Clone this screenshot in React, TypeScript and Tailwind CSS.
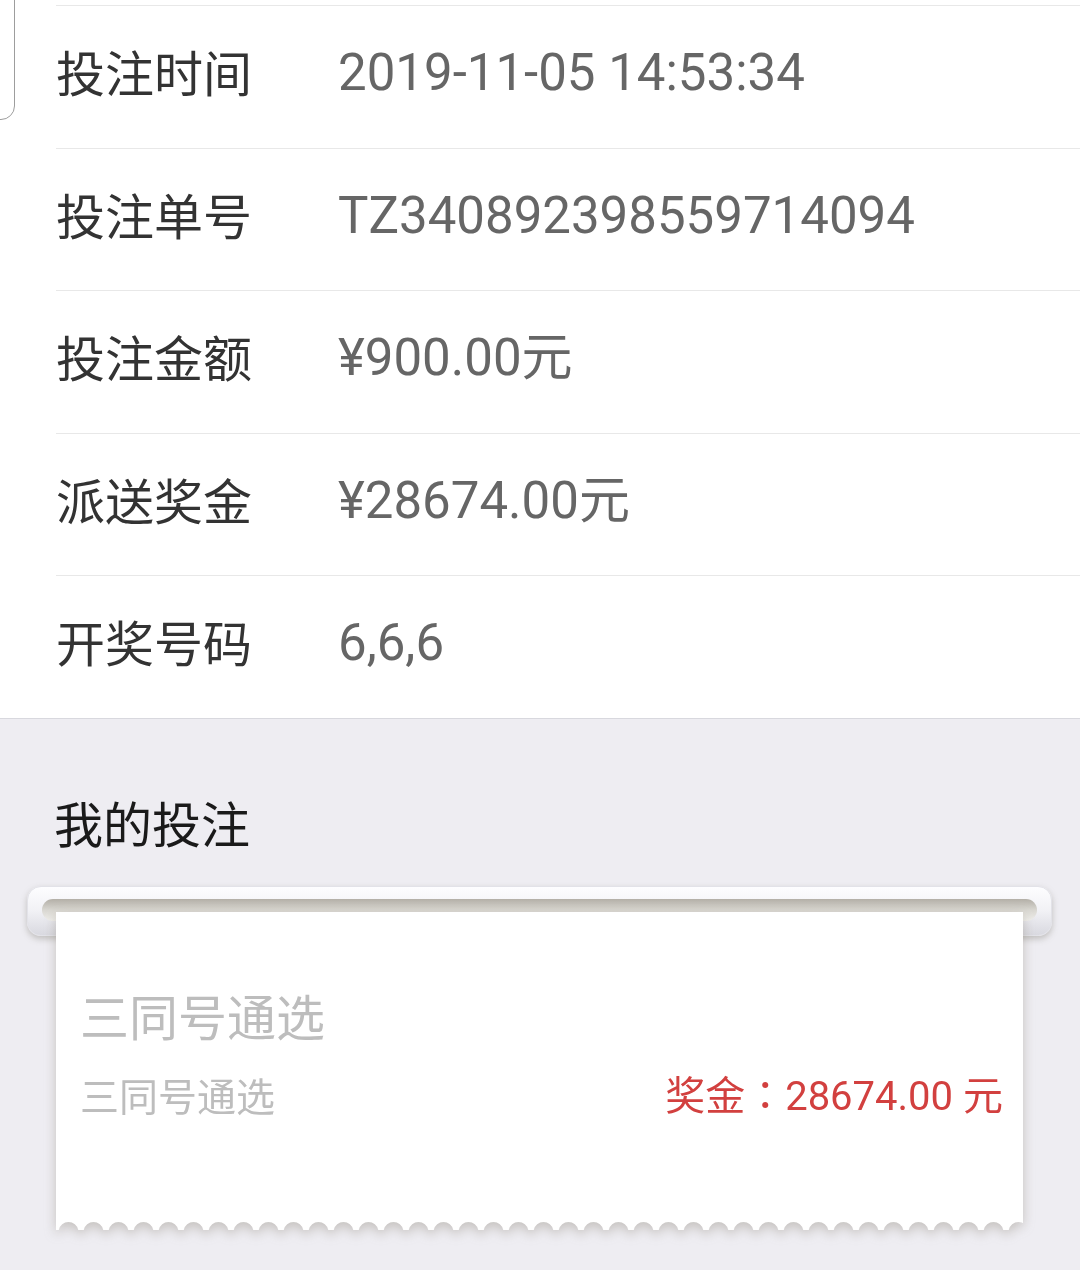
const cjk = "font-['Noto_Sans_CJK_SC',sans-serif]"
const mixed = "font-['Roboto','Noto_Sans_CJK_SC',sans-serif]"

const rows: [string, string][] = [
  ['投注时间', '2019-11-05 14:53:34'],
  ['投注单号', 'TZ340892398559714094'],
  ['投注金额', '¥900.00元'],
  ['派送奖金', '¥28674.00元'],
  ['开奖号码', '6,6,6'],
]

function InfoRow({label, value}: {label: string; value: string}) {
  return (
    <div className="ml-[56px] flex h-[142.5px] items-center border-t border-[#e8e8e8] pb-[8px]">
      <div className={`relative top-[-2px] w-[282px] text-[49px] leading-none text-[#333333] ${cjk}`}>
        {label}
      </div>
      <div className={`text-[51px] leading-none text-[#666666] ${mixed}`}>{value}</div>
    </div>
  )
}

function ScallopEdge() {
  return (
    <svg className="block h-[12px] w-full" preserveAspectRatio="none">
      <defs>
        <pattern id="scallop" width="25" height="12" patternUnits="userSpaceOnUse">
          <path d="M0 0 H25 V12 H22.3 A10 10 0 0 0 2.7 12 H0 Z" fill="#ffffff" />
        </pattern>
      </defs>
      <rect width="100%" height="12" fill="url(#scallop)" />
    </svg>
  )
}

function Receipt() {
  return (
    <div className="pl-[27px] pr-[28px]">
      <div className="h-[50px] rounded-[14px] border border-[#e2e2e8] bg-gradient-to-b from-[#fdfdff] via-[#f1f1f5] to-[#d9d9e0] px-[14px] pt-[12px] shadow-[0_3px_6px_rgba(110,105,95,0.35)]">
        <div className="h-[22px] rounded-full bg-gradient-to-b from-[#b3afa7] via-[#d9d7d1] to-[#f0efec]" />
      </div>
      <div className="relative mx-[29px] mt-[-24px] drop-shadow-[0_4px_6px_rgba(120,112,95,0.35)]">
        <div className="bg-white pb-[97px] pl-[24px] pr-[20px] pt-[74px]">
          <div className={`text-[49px] leading-[1.2] text-[#bdbdbd] ${cjk}`}>三同号通选</div>
          <div className="mt-[24px] flex items-center justify-between">
            <span className={`text-[39px] leading-[1.2] text-[#bdbdbd] ${cjk}`}>三同号通选</span>
            <span className={`text-[40px] leading-[1.2] text-[#d2403f] ${mixed}`}>
              奖金<span className="font-['Noto_Sans_CJK_JP',sans-serif]">：</span>28674.00 元
            </span>
          </div>
        </div>
        <ScallopEdge />
      </div>
    </div>
  )
}

export default function App() {
  return (
    <div className="relative h-[1270px] w-[1080px] overflow-hidden bg-[#eeedf2]">
      <div className="bg-white pt-[5px]">
        {rows.map(([label, value]) => (
          <InfoRow key={label} label={label} value={value} />
        ))}
      </div>
      <div className="border-t border-[#d8d8de] pt-[66px]">
        <div className={`pl-[54px] text-[49px] leading-[1.5] text-[#1a1a1a] ${cjk}`}>我的投注</div>
        <div className="mt-[28px]">
          <Receipt />
        </div>
      </div>
      <div className="absolute left-[-40px] top-[-20px] h-[140px] w-[55px] rounded-br-[14px] border border-[#9d9d9d]" />
    </div>
  )
}
